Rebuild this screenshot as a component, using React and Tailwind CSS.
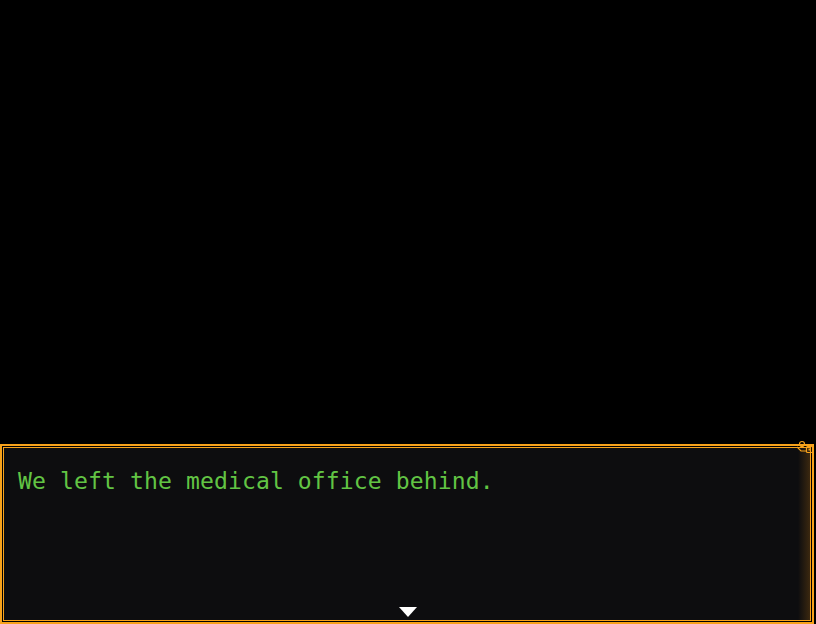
export default function App() {
  return (
    <div className="w-[816px] h-[624px] bg-black flex flex-col justify-end">
      <div className="relative w-[814px] h-[180px] border-2 border-[#f7a21b] bg-black p-[1px]">
        <div className="relative h-full border border-[#f7a21b] bg-[#0d0d0f] pl-[14px] pt-[19px]">
          <div className="absolute right-0 top-0 bottom-0 w-[12px] bg-gradient-to-r from-transparent to-[#5a3a10]/60" />
          <p
            className="relative text-[#62c444] text-[23.1px] leading-[28px] tracking-[0.09px]"
            style={{ fontFamily: '"DejaVu Sans Mono", monospace' }}
          >
            We left the medical office behind.
          </p>
          <svg className="absolute left-[395px] bottom-[3px]" width="18" height="10" viewBox="0 0 18 10">
            <polygon points="0,0 18,0 9,10" fill="#ffffff" />
          </svg>
        </div>
        <svg className="absolute right-[-3px] top-[-6px]" width="18" height="16" viewBox="0 0 18 16">
          <circle cx="5" cy="4" r="2.5" fill="none" stroke="#f7a21b" strokeWidth="1.2" />
          <rect x="9.5" y="6.5" width="6" height="6" rx="1" fill="none" stroke="#f7a21b" strokeWidth="1.2" />
          <rect x="11.5" y="8.5" width="2" height="2" fill="#f7a21b" />
          <path d="M0 7 L4 11 L9 11" fill="none" stroke="#f7a21b" strokeWidth="1.2" />
        </svg>
      </div>
    </div>
  );
}
